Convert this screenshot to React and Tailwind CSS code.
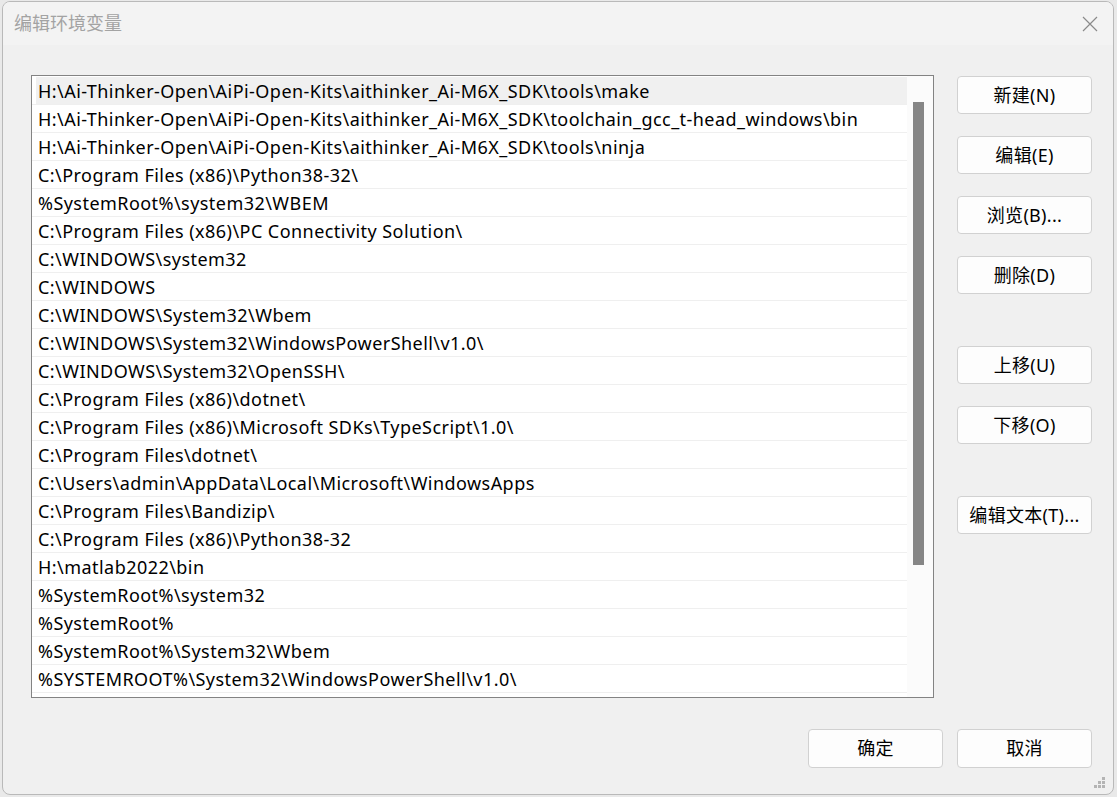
import React from "react";

const PATHS = [
  "H:\\Ai-Thinker-Open\\AiPi-Open-Kits\\aithinker_Ai-M6X_SDK\\tools\\make",
  "H:\\Ai-Thinker-Open\\AiPi-Open-Kits\\aithinker_Ai-M6X_SDK\\toolchain_gcc_t-head_windows\\bin",
  "H:\\Ai-Thinker-Open\\AiPi-Open-Kits\\aithinker_Ai-M6X_SDK\\tools\\ninja",
  "C:\\Program Files (x86)\\Python38-32\\",
  "%SystemRoot%\\system32\\WBEM",
  "C:\\Program Files (x86)\\PC Connectivity Solution\\",
  "C:\\WINDOWS\\system32",
  "C:\\WINDOWS",
  "C:\\WINDOWS\\System32\\Wbem",
  "C:\\WINDOWS\\System32\\WindowsPowerShell\\v1.0\\",
  "C:\\WINDOWS\\System32\\OpenSSH\\",
  "C:\\Program Files (x86)\\dotnet\\",
  "C:\\Program Files (x86)\\Microsoft SDKs\\TypeScript\\1.0\\",
  "C:\\Program Files\\dotnet\\",
  "C:\\Users\\admin\\AppData\\Local\\Microsoft\\WindowsApps",
  "C:\\Program Files\\Bandizip\\",
  "C:\\Program Files (x86)\\Python38-32",
  "H:\\matlab2022\\bin",
  "%SystemRoot%\\system32",
  "%SystemRoot%",
  "%SystemRoot%\\System32\\Wbem",
  "%SYSTEMROOT%\\System32\\WindowsPowerShell\\v1.0\\",
];

const FONT = { fontFamily: '"Noto Sans", "Noto Sans CJK SC", sans-serif' };

function Btn({ children, className = "" }) {
  return (
    <button
      className={
        "h-[38px] w-[135px] shrink-0 rounded-[4px] border border-[#d1d1d1] bg-[#fdfdfd] text-[18px] tracking-[0.3px] text-black " +
        className
      }
    >
      {children}
    </button>
  );
}

function CloseIcon() {
  return (
    <svg width="16" height="16" viewBox="0 0 16 16" fill="none" stroke="#8a8a8a" strokeWidth="1.2">
      <path d="M1 1 L15 15 M15 1 L1 15" />
    </svg>
  );
}

function Grip() {
  const dots = [
    [8, 0], [4, 4], [8, 4], [0, 8], [4, 8], [8, 8],
  ];
  return (
    <svg width="11" height="11" viewBox="0 0 11 11" className="absolute bottom-[6px] right-[8px]">
      {dots.map(([x, y], i) => (
        <rect key={i} x={x} y={y} width="3" height="3" fill="#b4b4b4" />
      ))}
    </svg>
  );
}

export default function App() {
  return (
    <div className="h-[797px] w-[1117px] overflow-hidden bg-[#e9e9e9] pl-[2px] pr-[3px] pt-[1px] pb-[2px]" style={FONT}>
      <div className="relative flex h-full w-full flex-col overflow-hidden rounded-[8px] border border-[#b9b9b9] bg-[#f0f0f0]">
        {/* title bar */}
        <div className="flex h-[43px] shrink-0 items-center justify-between bg-[#f3f3f3] pl-[11px] pr-[15px]">
          <span className="text-[18px] text-[#a3a3a3]">编辑环境变量</span>
          <CloseIcon />
        </div>

        {/* body */}
        <div className="flex flex-1 flex-col pl-[28px] pr-[21px] pt-[30px]">
          <div className="flex gap-[23px]">
            {/* list box */}
            <div className="flex h-[623px] w-[903px] border border-[#838383] bg-white">
              <div className="flex-1 overflow-hidden pt-[1px]">
                {PATHS.map((p, i) => (
                  <div key={i} className="h-[28px] border-b border-[#efefef]">
                    <div
                      className={
                        "ml-[4px] flex h-[27px] items-center whitespace-nowrap pl-[2px] pt-[2px] text-[18px] tracking-[0.45px] text-black " +
                        (i === 0 ? "bg-[#f0f0f0]" : "")
                      }
                    >
                      {p}
                    </div>
                  </div>
                ))}
              </div>
              <div className="w-[26px] shrink-0 bg-[#fbfbfb] pl-[6px] pt-[26px]">
                <div className="h-[463px] w-[11px] bg-[#868686]" />
              </div>
            </div>

            {/* side buttons */}
            <div className="flex flex-col pt-[1px]">
              <Btn>新建(N)</Btn>
              <Btn className="mt-[22px]">编辑(E)</Btn>
              <Btn className="mt-[22px]">浏览(B)...</Btn>
              <Btn className="mt-[22px]">删除(D)</Btn>
              <Btn className="mt-[52px]">上移(U)</Btn>
              <Btn className="mt-[22px]">下移(O)</Btn>
              <Btn className="mt-[52px]">编辑文本(T)...</Btn>
            </div>
          </div>

          {/* bottom buttons */}
          <div className="mt-[31px] flex justify-end gap-[14px]">
            <Btn className="h-[39px]">确定</Btn>
            <Btn className="h-[39px]">取消</Btn>
          </div>
        </div>
        <Grip />
      </div>
    </div>
  );
}
